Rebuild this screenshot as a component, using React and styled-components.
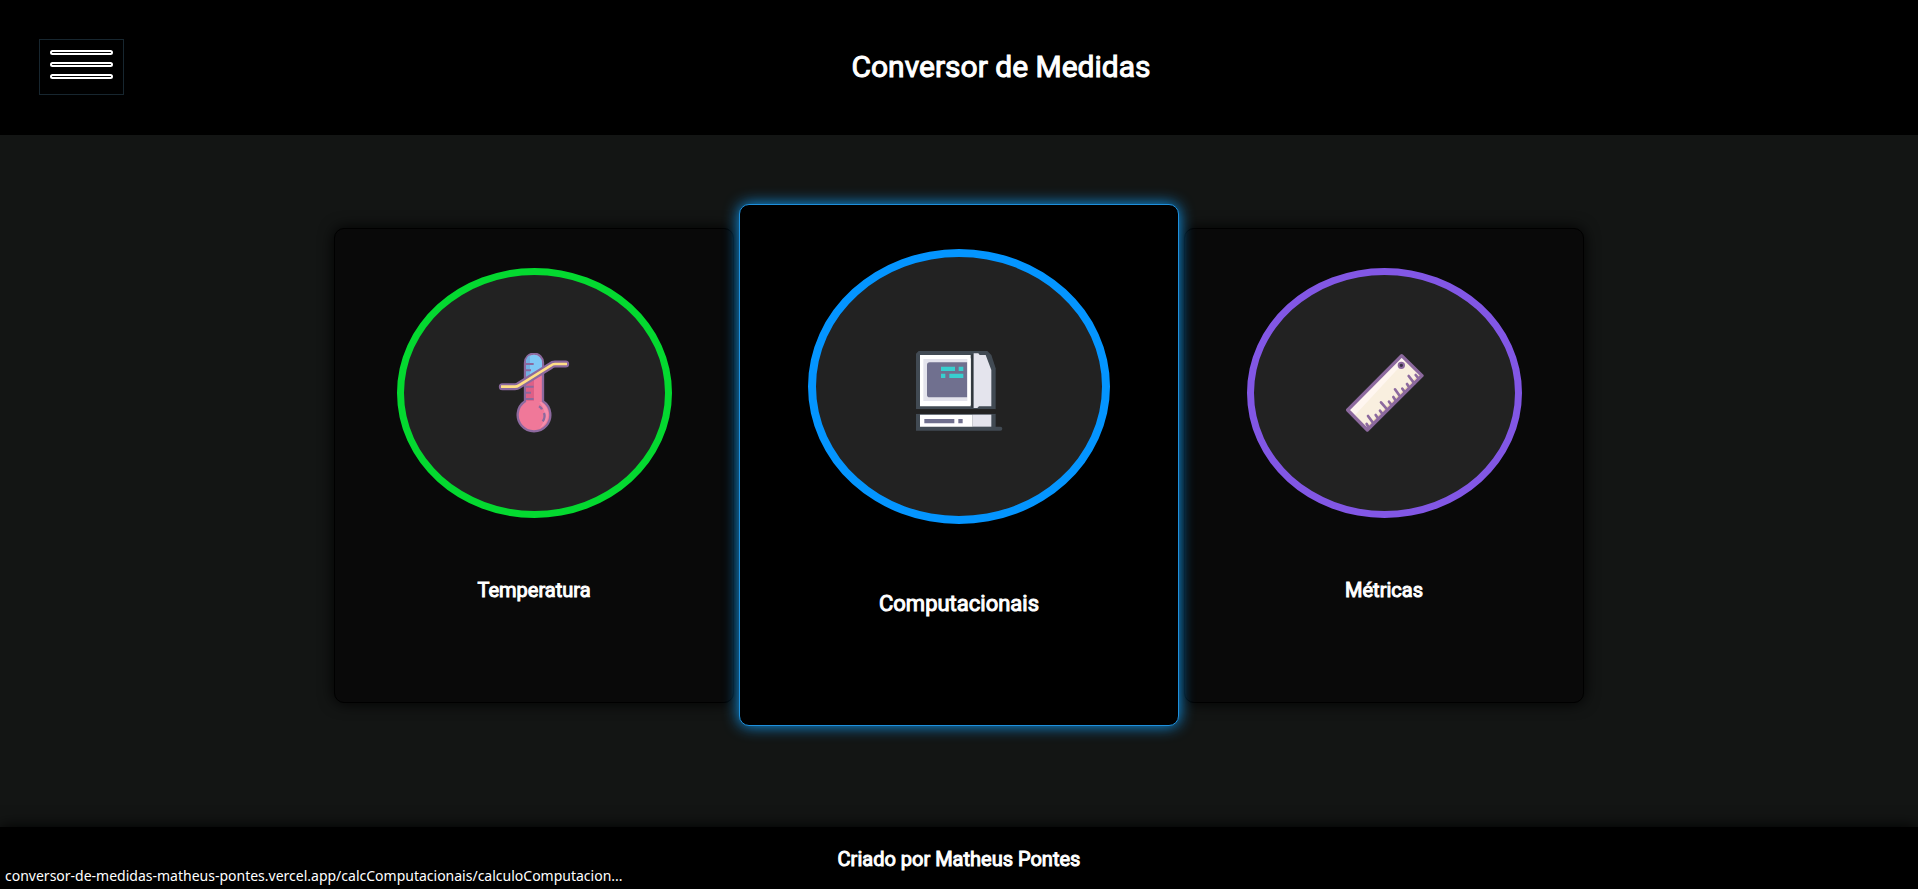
import React from "react";
import styled, { createGlobalStyle, css } from "styled-components";

const GlobalStyle = createGlobalStyle`
  * { box-sizing: border-box; margin: 0; padding: 0; }
  body { background: #131514; color: #fff; font-family: Roboto, "Liberation Sans", sans-serif; }
`;

const heavyText = css`
  font-weight: 400;
  -webkit-text-stroke: 1px #fff;
`;

const Page = styled.div`
  display: flex;
  flex-direction: column;
  min-height: 100vh;
`;

const Header = styled.header`
  display: flex;
  align-items: center;
  min-height: 135px;
  padding: 0 40px 1px 39px;
  background: #000;
`;

const MenuButton = styled.button`
  display: flex;
  flex-direction: column;
  gap: 7px;
  width: 85px;
  height: 56px;
  padding: 10px;
  background: #000;
  border: 1px solid #17262f;
  cursor: pointer;
`;

const MenuBar = styled.span`
  height: 5px;
  border: 2px solid #fff;
  border-radius: 3px;
`;

const Title = styled.h1`
  ${heavyText}
  flex: 1;
  font-size: 30px;
  line-height: 40px;
  text-align: center;
`;

const Main = styled.main`
  flex: 1;
  display: flex;
  align-items: center;
  justify-content: center;
  gap: 5px;
  padding-bottom: 32px;
`;

const Card = styled.a`
  display: flex;
  flex-direction: column;
  align-items: center;
  flex: 0 1 ${(p) => (p.$active ? 440 : 400)}px;
  height: ${(p) => (p.$active ? 522 : 475)}px;
  padding-top: ${(p) => (p.$active ? 44 : 39)}px;
  background: ${(p) => (p.$active ? "#000" : "#090909")};
  border: 1px solid ${(p) => (p.$active ? "#1e90dd" : "#000")};
  border-radius: 10px;
  box-shadow: 0 0 ${(p) => (p.$active ? "15px #0f9bf5" : "15px #000")};
  color: #fff;
  text-decoration: none;
  position: relative;
  z-index: ${(p) => (p.$active ? 1 : 0)};
`;

const Ring = styled.div`
  display: flex;
  align-items: center;
  justify-content: center;
  width: ${(p) => (p.$active ? 302 : 275)}px;
  height: ${(p) => (p.$active ? 275 : 250)}px;
  border: ${(p) => (p.$active ? 8 : 7)}px solid ${(p) => p.$color};
  border-radius: 50%;
  background: #222;
`;

const Icon = styled.svg`
  width: ${(p) => (p.$active ? 88 : 80)}px;
  height: ${(p) => (p.$active ? 88 : 80)}px;
`;

const Label = styled.h2`
  ${heavyText}
  margin-top: ${(p) => (p.$active ? 66 : 58)}px;
  font-size: ${(p) => (p.$active ? 22 : 20)}px;
  line-height: 28px;
`;

const Footer = styled.footer`
  display: flex;
  align-items: center;
  justify-content: center;
  min-height: 62px;
  padding-top: 2px;
  background: #000;
  box-shadow: 0 0 15px #000;
`;

const Credit = styled.p`
  ${heavyText}
  font-size: 20px;
  line-height: 28px;
`;

const StatusBar = styled.div`
  position: fixed;
  left: 0;
  bottom: 0;
  padding: 0 5px 1px;
  background: #000;
  font-family: "Noto Sans", "Open Sans", sans-serif;
  font-size: 14px;
  line-height: 24px;
`;

function Thermometer() {
  return (
    <Icon viewBox="42 69 240 240" aria-hidden="true">
      <path d="M135 214V98a27 27 0 0 1 54 0v116a49 49 0 1 1-54 0z" fill="#f07899" stroke="#8c699e" strokeWidth="7" />
      <path d="M138 150V98a24 24 0 0 1 48 0v22z" fill="#7fc8f6" />
      <path d="M138 150V98q0-18 12-22v69z" fill="#72b0e1" />
      <path d="M138 158l24-14v68h-24z" fill="#dd6087" />
      <path d="M184 216a45 45 0 0 1-6 79q16-17 16-38 0-24-16-41z" fill="#f48fad" />
      <path d="M136 102h25M136 121h17M136 170h25M136 188h17M136 207h25" stroke="#8c699e" strokeWidth="6" />
      <path d="M177 229q7 4 9 9M192 249q5 13-4 25" fill="none" stroke="#8c699e" strokeWidth="7" />
      <path d="M67 170h38q6 0 12-4l95-59q6-5 13-5h32" fill="none" stroke="#8c699e" strokeWidth="21" strokeLinecap="round" strokeLinejoin="round" />
      <path d="M67 170h38q6 0 12-4l95-59q6-5 13-5h32" fill="none" stroke="#ffdf85" strokeWidth="8" strokeLinecap="square" strokeLinejoin="round" />
    </Icon>
  );
}

function Computer() {
  return (
    <Icon $active viewBox="45 22 264 264" aria-hidden="true">
      <path d="M56 46h206l12 12 13 40v123H48V54z" fill="#414a53" />
      <path d="M48 234h239v39h14q6 0 6 6t-6 6H48z" fill="#414a53" />
      <path d="M60 58h152v154H60z" fill="#fff" />
      <path d="M70 70h134v126H70z" fill="#e4e4ed" />
      <path d="M89 80h113v105H89q-8 0-8-8V88q0-8 8-8z" fill="#70708f" />
      <path d="M202 68h10v140h-10z" fill="#fff" />
      <path d="M214 56h5v160h-5z" fill="#30363b" />
      <path d="M221 53h14l4 5h18l17 45v109h-37l-5 5h-11z" fill="#e4e4ed" />
      <path d="M123 93h42v13h-42zM176 93h14v13h-14zM123 114h13v13h-13zM148 114h42v13h-42z" fill="#38cfcf" />
      <path d="M60 237h158v36H60z" fill="#fff" />
      <path d="M218 237h56v36h-56z" fill="#e4e4ed" />
      <path d="M73 250h90v13H73zM175 250h13v13h-13z" fill="#70708f" />
      <path d="M48 221h239v13H48z" fill="#222" />
    </Icon>
  );
}

function Ruler() {
  return (
    <Icon viewBox="42 39 240 240" aria-hidden="true">
      <path d="M215 47l61 60-164 163-59-60z" fill="#f9efdf" />
      <path d="M215 47l13 13L72 229l-19-19z" fill="#fff6f0" />
      <path d="M270 101l6 6-164 163-6-6z" fill="#f2dab8" />
      <path d="M215 47l61 60-164 163-59-60z" fill="none" stroke="#8c699e" strokeWidth="10" strokeLinejoin="round" />
      <path d="M117 264l-7-12M130 250l-16-22M145 236l-8-11M158 223l-8-11M172 209l-19-22M185 196l-8-11M198 183l-8-12M211 170l-16-22M225 157l-8-11M239 144l-8-12M253 130l-17-22M266 116l-9-11" stroke="#8c699e" strokeWidth="8" strokeLinecap="round" />
      <circle cx="214" cy="76" r="8" fill="#383044" stroke="#8c699e" strokeWidth="6" />
    </Icon>
  );
}

const cards = [
  { label: "Temperatura", href: "#temperatura", color: "#04d930", Art: Thermometer },
  { label: "Computacionais", href: "#computacionais", color: "#0495ff", Art: Computer, active: true },
  { label: "Métricas", href: "#metricas", color: "#8257e5", Art: Ruler },
];

export default function App() {
  return (
    <Page>
      <GlobalStyle />
      <Header>
        <MenuButton type="button" aria-label="Menu">
          <MenuBar />
          <MenuBar />
          <MenuBar />
        </MenuButton>
        <Title>Conversor de Medidas</Title>
      </Header>
      <Main>
        {cards.map(({ label, href, color, Art, active }) => (
          <Card key={label} href={href} $active={active}>
            <Ring $color={color} $active={active}>
              <Art />
            </Ring>
            <Label $active={active}>{label}</Label>
          </Card>
        ))}
      </Main>
      <Footer>
        <Credit>Criado por Matheus Pontes</Credit>
      </Footer>
      <StatusBar>conversor-de-medidas-matheus-pontes.vercel.app/calcComputacionais/calculoComputacion...</StatusBar>
    </Page>
  );
}
